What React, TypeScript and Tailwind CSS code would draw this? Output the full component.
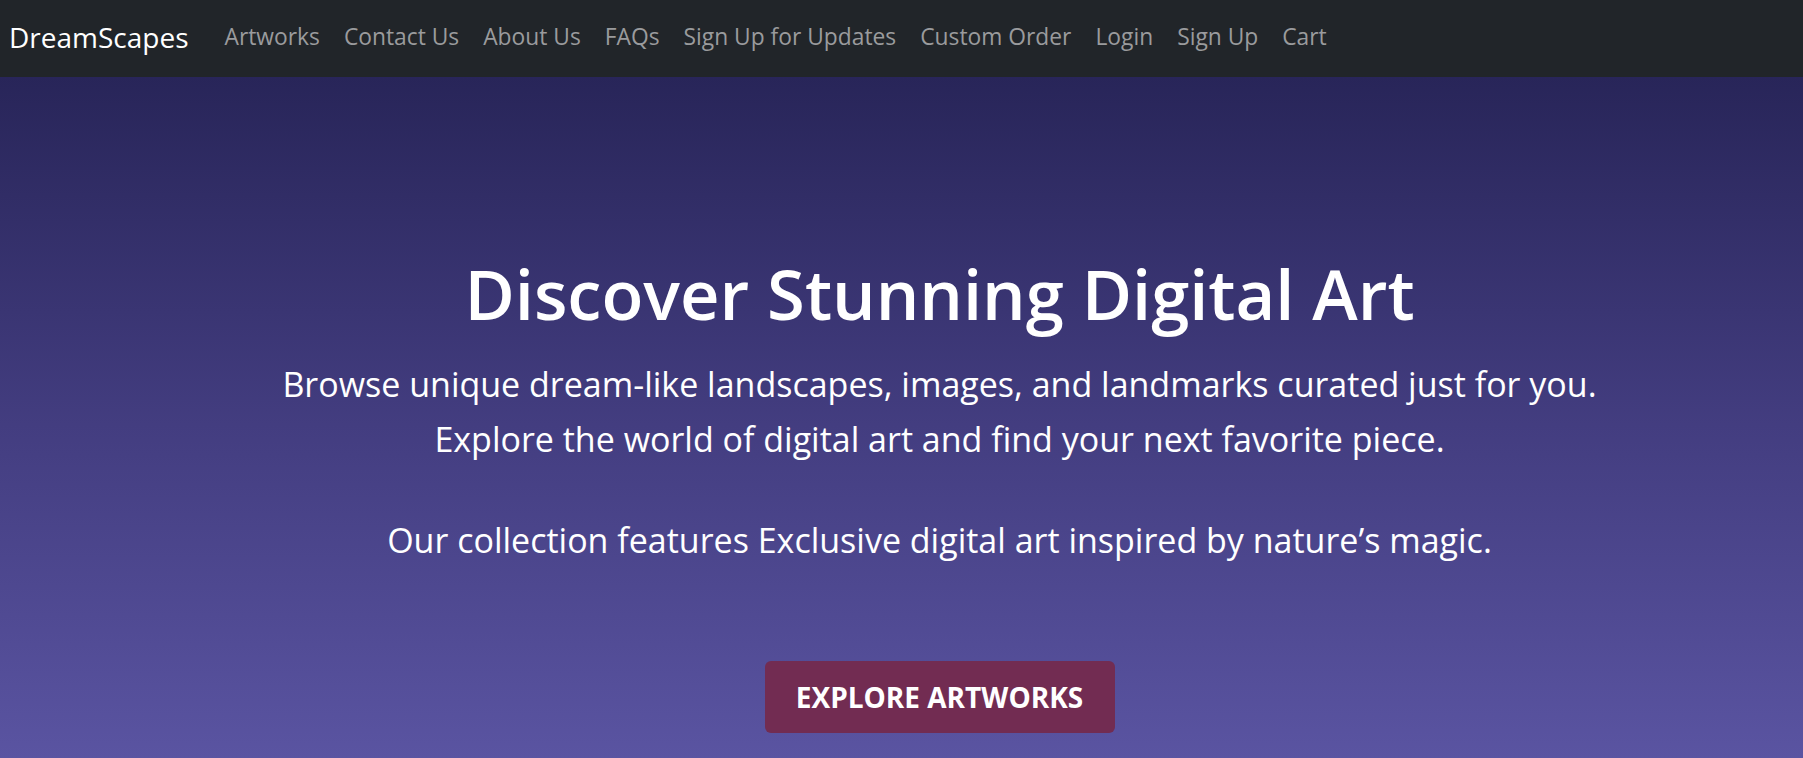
const navLinks = [
  "Artworks",
  "Contact Us",
  "About Us",
  "FAQs",
  "Sign Up for Updates",
  "Custom Order",
  "Login",
  "Sign Up",
  "Cart",
];

const Navbar = () => {
  return (
    <nav className="flex h-[77px] w-full items-center bg-[#212529] pb-[4px] pl-[9px]">
      <a href="#" className="mr-[24px] text-[28px] leading-none text-white">
        DreamScapes
      </a>
      <ul className="flex items-center pt-[2px]">
        {navLinks.map((link) => (
          <li key={link}>
            <a
              href="#"
              className="block px-[12px] text-[22.8px] leading-none text-[#9a9b9d] hover:text-white"
            >
              {link}
            </a>
          </li>
        ))}
      </ul>
    </nav>
  );
};

const Hero = () => {
  return (
    <section className="flex min-h-[681px] w-full flex-col items-center bg-gradient-to-b from-[#282559] via-[#433d80] to-[#5b55a3] pb-[40px] pl-[76px] pt-[176px] text-center text-white">
      <h1 className="text-[68.7px] font-semibold leading-[1.2]">
        Discover Stunning Digital Art
      </h1>
      {/* intro copy */}
      <p className="mt-[22px] text-[34px] leading-[55px]">
        <span className="block">
          Browse unique dream-like landscapes, images, and landmarks curated
          just for you.
        </span>
        <span className="block">
          Explore the world of digital art and find your next favorite piece.
        </span>
      </p>
      <p className="mt-[46px] text-[34px] leading-[55px]">
        Our collection features Exclusive digital art inspired by nature’s
        magic.
      </p>
      <a
        href="#"
        className="mt-[93px] flex h-[72px] w-[350px] items-center justify-center rounded-[6px] bg-[#722c52] text-[28px] font-bold uppercase text-white"
      >
        Explore Artworks
      </a>
    </section>
  );
};

const App = () => {
  return (
    <div className="min-h-screen w-full font-['Open_Sans',sans-serif]">
      <Navbar />
      <Hero />
    </div>
  );
};

export default App;
